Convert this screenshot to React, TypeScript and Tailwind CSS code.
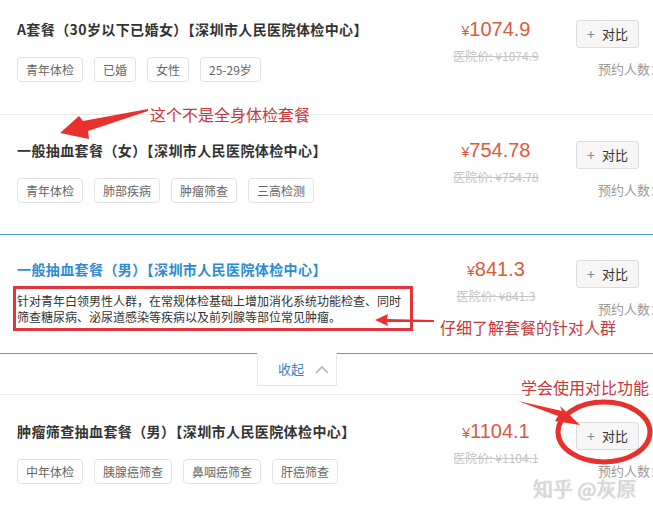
const cjk = "font-['Microsoft_YaHei','Noto_Sans_CJK_SC',sans-serif]";

type Pkg = {
  title: string;
  price: string;
  tags: string[];
};

function Tag({ label }: { label: string }) {
  return (
    <span className="h-[25px] px-[8px] leading-[23px] text-[12px] text-[#666] border border-[#e2e2e2] rounded-[4px] bg-white">
      {label}
    </span>
  );
}

function PriceCol({ price }: { price: string }) {
  return (
    <>
      <div className="w-[100px] flex flex-col items-center">
        <div className="-mt-[4px] h-[28px] leading-[28px] text-[#dc5a3b] font-['Liberation_Sans',sans-serif]">
          <span className="text-[14px]">¥</span>
          <span className="text-[20px]">{price}</span>
        </div>
        <div className="mt-[5px] leading-[16px] text-[12px] text-[#c4c4c4] line-through">
          医院价: ¥{price}
        </div>
      </div>
      <div className="ml-[30px] w-[77px] overflow-hidden">
        <button className="mt-[1px] w-[63px] h-[28px] flex items-center justify-center gap-[7px] bg-[#f6f6f6] border border-[#dcdcdc] rounded-[3px] text-[13px] text-[#333]">
          <span className="text-[#888] text-[14px] leading-none">+</span>
          <span>对比</span>
        </button>
        <div className="mt-[13px] pl-[22px] leading-[16px] text-[13px] text-[#999] whitespace-nowrap">
          预约人数：
        </div>
      </div>
    </>
  );
}

function Row({ pkg, pad }: { pkg: Pkg; pad: string }) {
  return (
    <div className={`flex ${pad}`}>
      <div className="flex-1 pl-[17px]">
        <h3 className="text-[14px] leading-[20px] font-bold tracking-[0.4px] text-[#333] whitespace-nowrap">{pkg.title}</h3>
        <div className="mt-[18px] flex gap-[11px]">
          {pkg.tags.map((t) => (
            <Tag key={t} label={t} />
          ))}
        </div>
      </div>
      <PriceCol price={pkg.price} />
    </div>
  );
}

export default function App() {
  return (
    <div className={`relative w-[653px] h-[516px] overflow-hidden bg-white ${cjk}`}>
      <div className="h-[115px] border-b border-[#e8e8e8]">
        <Row
          pad="pt-[19px]"
          pkg={{
            title: "A套餐（30岁以下已婚女）【深圳市人民医院体检中心】",
            price: "1074.9",
            tags: ["青年体检", "已婚", "女性", "25-29岁"],
          }}
        />
      </div>
      <div className="h-[119px]">
        <Row
          pad="pt-[25px]"
          pkg={{
            title: "一般抽血套餐（女）【深圳市人民医院体检中心】",
            price: "754.78",
            tags: ["青年体检", "肺部疾病", "肿瘤筛查", "三高检测"],
          }}
        />
      </div>

      {/* expanded item */}
      <div className="h-[120px] border-y border-[#4a9fd6] flex pt-[24px]">
        <div className="flex-1">
          <h3 className="pl-[17px] text-[14px] leading-[20px] font-bold tracking-[0.4px] text-[#2b8bd4] whitespace-nowrap">
            一般抽血套餐（男）【深圳市人民医院体检中心】
          </h3>
          <div className="mt-[7px] ml-[13px] w-[400px] border-[3px] border-[#e2363a] px-[1px] pt-[4px] pb-[3px] text-[12px] leading-[16px] text-[#333]">
            针对青年白领男性人群，在常规体检基础上增加消化系统功能检查、同时筛查糖尿病、泌尿道感染等疾病以及前列腺等部位常见肿瘤。
          </div>
        </div>
        <PriceCol price="841.3" />
      </div>

      <div className="h-[41px]">
        <div className="relative -mt-px ml-[257px] w-[80px] h-[33px] bg-white border-x border-b border-[#e6e6e6] flex items-center pl-[20px] gap-[11px]">
          <span className="text-[13px] text-[#3b80c2]">收起</span>
          <svg width="14" height="9" viewBox="0 0 14 9">
            <polyline points="1,8 7,2 13,8" fill="none" stroke="#b5b5b5" strokeWidth="1.6" />
          </svg>
        </div>
      </div>

      <div className="border-t border-[#e8e8e8]">
        <Row
          pad="pt-[26px]"
          pkg={{
            title: "肿瘤筛查抽血套餐（男）【深圳市人民医院体检中心】",
            price: "1104.1",
            tags: ["中年体检", "胰腺癌筛查", "鼻咽癌筛查", "肝癌筛查"],
          }}
        />
      </div>

      {/* annotations drawn over the screenshot */}
      <svg className="absolute inset-0 pointer-events-none" width="653" height="516" viewBox="0 0 653 516">
        <polygon points="60,133 79,116 83,121 148,109 148,111 88,131 89,139" fill="#e8302f" />
        <polygon points="375,320 388,314 387,319 434,320 434,322 387,322 388,326" fill="#e8302f" />
        <polygon points="518,401 562,411 560,406 580,425 555,421 558,416" fill="#e8302f" />
        <ellipse cx="604" cy="432" rx="46" ry="30" fill="none" stroke="#e8302f" strokeWidth="5" />
      </svg>
      <span className="absolute left-[150px] top-[104px] text-[16px] leading-[20px] text-[#c9383a]">这个不是全身体检套餐</span>
      <span className="absolute left-[440px] top-[317px] text-[16px] leading-[20px] text-[#c9383a]">仔细了解套餐的针对人群</span>
      <span className="absolute left-[521px] top-[377px] text-[16px] leading-[20px] text-[#c9383a]">学会使用对比功能</span>
      <span className="absolute left-[533px] top-[476px] text-[20px] leading-[26px] text-[#dedede] [text-shadow:0_0_1px_#a0a0a0]">
        知乎 @灰原
      </span>
    </div>
  );
}
